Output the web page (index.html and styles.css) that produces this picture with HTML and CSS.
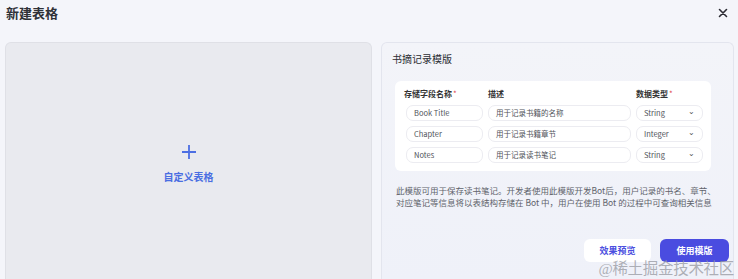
FILE: index.html
```html
<!DOCTYPE html>
<html lang="zh-CN">
<head>
  <meta charset="UTF-8" />
  <meta name="viewport" content="width=device-width, initial-scale=1.0" />
  <title>新建表格</title>
  <link rel="stylesheet" href="styles.css">
</head>
<body>
  <div class="modal">
    <div class="cabecalho">
      <div class="titulo">新建表格</div>
      <svg class="fechar" width="10" height="10" viewBox="0 0 10 10">
        <path d="M1.5 1.5 L8.5 8.5 M8.5 1.5 L1.5 8.5" stroke="#2b2b33" stroke-width="1.6" stroke-linecap="round" />
      </svg>
    </div>

    <div class="cartoes">
      <div class="cartao-novo">
        <svg width="16" height="16" viewBox="0 0 16 16">
          <path d="M8 1 V15 M1 8 H15" stroke="#4d6fe3" stroke-width="1.8" />
        </svg>
        <div class="novo-texto">自定义表格</div>
      </div>

      <div class="cartao-modelo">
        <div class="modelo-titulo">书摘记录模版</div>

        <div class="tabela">
          <div class="linha cabeca">
            <span>存储字段名称<i>*</i></span>
            <span>描述</span>
            <span>数据类型<i>*</i></span>
          </div>
          <div class="linha">
            <div class="campo">Book Title</div>
            <div class="campo">用于记录书籍的名称</div>
            <div class="campo seletor">String <b>&#8964;</b></div>
          </div>
          <div class="linha">
            <div class="campo">Chapter</div>
            <div class="campo">用于记录书籍章节</div>
            <div class="campo seletor">Integer <b>&#8964;</b></div>
          </div>
          <div class="linha">
            <div class="campo">Notes</div>
            <div class="campo">用于记录读书笔记</div>
            <div class="campo seletor">String <b>&#8964;</b></div>
          </div>
        </div>

        <p class="descricao">此模版可用于保存读书笔记。开发者使用此模版开发Bot后，用户记录的书名、章节、对应笔记等信息将以表结构存储在 Bot 中，用户在使用 Bot 的过程中可查询相关信息</p>

        <div class="botoes">
          <button class="btn-previa">效果预览</button>
          <button class="btn-usar">使用模版</button>
        </div>
      </div>
    </div>
  </div>

  <div class="marca">@稀土掘金技术社区</div>
</body>
</html>
```

FILE: styles.css
```css
* { box-sizing: border-box; }
html, body { height: 100%; }
body {
  margin: 0;
  background: #f4f5fa;
  font-family: "Noto Sans CJK SC", "Noto Sans", sans-serif;
  color: #1f2329;
  overflow: hidden;
}
.modal       { padding: 0 4px 0 5px; }
.cabecalho {
  display: flex; justify-content: space-between; align-items: center;
  height: 42px; padding: 0 6px 18px 1px;
}
.titulo      { font-size: 13px; font-weight: bold; color: #2f3137; }
.fechar      { margin-top: 2px; }

.cartoes     { display: flex; gap: 9px; align-items: flex-start; }

.cartao-novo {
  width: 367px; height: 237px;
  background: #e9eaef;
  border: 1px solid #dfe0e6;
  border-bottom: none;
  border-radius: 6px 6px 0 0;
  display: flex; flex-direction: column; align-items: center;
  padding-top: 101px;
}
.novo-texto  { font-size: 10px; font-weight: bold; color: #4a6ee2; margin-top: 9px; }

.cartao-modelo {
  width: 353px; height: 237px;
  background: linear-gradient(180deg, #f3f4f9 0%, #eff1f9 100%);
  border: 1px solid #e3e5ee;
  border-bottom: none;
  border-radius: 6px 6px 0 0;
  padding: 9px 0 0 10px;
}
.modelo-titulo { font-size: 10px; color: #2b2d33; line-height: 14px; }

.tabela {
  width: 316px; margin: 15px 0 0 3px;
  background: #fff; border-radius: 6px;
  padding: 8px 8px 8px 11px;
  display: flex; flex-direction: column; gap: 5px;
}
.linha {
  display: grid; grid-template-columns: 77px 143px 67px; column-gap: 5px;
}
.linha.cabeca { font-size: 8px; font-weight: bold; color: #333; line-height: 10px; margin-bottom: 1px; }
.linha.cabeca i { color: #e0484d; font-style: normal; font-weight: normal; margin-left: 1px; }
.linha.cabeca span:first-child { margin-left: -2px; }
.campo {
  height: 16px; border: 1px solid #ececf1; border-radius: 7px;
  font-size: 7.5px; color: #50535a; line-height: 14px; padding: 0 7px;
  white-space: nowrap;
}
.seletor     { display: flex; justify-content: space-between; }
.seletor b   { font-weight: normal; font-size: 8px; line-height: 10px; color: #555; }

.descricao {
  margin: 13px 16px 0 4px;
  font-size: 8.5px; line-height: 12px; color: #60636b;
}

.botoes      { display: flex; justify-content: flex-end; gap: 9px; margin: 31px 4px 0 0; }
.botoes button {
  font-family: inherit; font-size: 9px; font-weight: bold;
  height: 23px; border-radius: 6px; border: none; padding: 0;
}
.btn-previa  { width: 67px; background: #fff; color: #4b4fe0; }
.btn-usar    { width: 69px; height: 24px; background: #4a4ce0; color: #fff; }

.marca {
  position: absolute; right: 4px; bottom: 1px;
  font-size: 15.5px; color: rgba(150, 152, 160, 0.75);
  font-family: "Liberation Serif", "Noto Sans CJK SC", serif;
  letter-spacing: -0.3px;
}
```
